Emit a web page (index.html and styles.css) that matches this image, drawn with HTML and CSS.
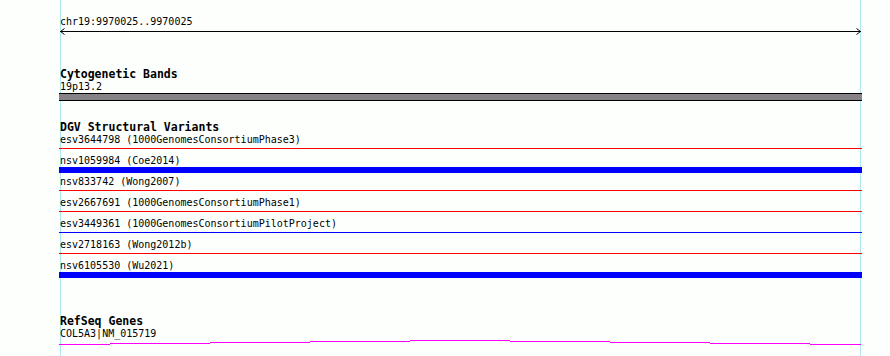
FILE: index.html
```html
<!DOCTYPE html>
<html lang="en">
<head>
  <meta charset="UTF-8" />
  <title>Track view</title>
  <link rel="stylesheet" href="styles.css">
</head>
<body>

<div class="track-view">

  <div class="ruler">
    <div class="label">chr19:9970025..9970025</div>
    <svg class="ruler-arrow" width="803" height="9" viewBox="0 0 803 9">
      <line x1="1" y1="4.5" x2="802" y2="4.5" />
      <polyline points="5.5,1.5 1.5,4.5 5.5,7.5" />
      <polyline points="797.5,1.5 801.5,4.5 797.5,7.5" />
    </svg>
  </div>

  <section class="track track-bands">
    <h2 class="track-title">Cytogenetic Bands</h2>
    <div class="label">19p13.2</div>
    <div class="band"></div>
  </section>

  <section class="track track-dgv">
    <h2 class="track-title">DGV Structural Variants</h2>
    <div class="variant-list">
      <div class="feature-row">
        <div class="label">esv3644798 (1000GenomesConsortiumPhase3)</div>
        <div class="feature thin red"></div>
      </div>
      <div class="feature-row">
        <div class="label">nsv1059984 (Coe2014)</div>
        <div class="feature thick blue"></div>
      </div>
      <div class="feature-row">
        <div class="label">nsv833742 (Wong2007)</div>
        <div class="feature thin red"></div>
      </div>
      <div class="feature-row">
        <div class="label">esv2667691 (1000GenomesConsortiumPhase1)</div>
        <div class="feature thin red"></div>
      </div>
      <div class="feature-row">
        <div class="label">esv3449361 (1000GenomesConsortiumPilotProject)</div>
        <div class="feature thin blue"></div>
      </div>
      <div class="feature-row">
        <div class="label">esv2718163 (Wong2012b)</div>
        <div class="feature thin red"></div>
      </div>
      <div class="feature-row">
        <div class="label">nsv6105530 (Wu2021)</div>
        <div class="feature thick blue"></div>
      </div>
    </div>
  </section>

  <section class="track track-genes">
    <h2 class="track-title">RefSeq Genes</h2>
    <div class="label">COL5A3|NM_015719</div>
    <!-- intron line, drawn as 1px steps -->
    <svg class="intron" width="803" height="5" viewBox="0 0 803 5">
      <rect x="0" y="4" width="51" height="1" />
      <rect x="51" y="3" width="100" height="1" />
      <rect x="151" y="2" width="100" height="1" />
      <rect x="251" y="1" width="100" height="1" />
      <rect x="351" y="0" width="100" height="1" />
      <rect x="451" y="1" width="100" height="1" />
      <rect x="551" y="2" width="100" height="1" />
      <rect x="651" y="3" width="100" height="1" />
      <rect x="751" y="4" width="51" height="1" />
    </svg>
  </section>

</div>

</body>
</html>
```

FILE: styles.css
```css
* { box-sizing: border-box; }
html, body {
  margin: 0;
  height: 100%;
}
body {
  background-color: #fdfffd;
  color: #000;
  font-family: "DejaVu Sans Mono", "Liberation Mono", monospace;
  overflow: hidden;
}
.track-view {
  height: 100%;
  padding: 16px 0 0 59px;
  /* the two light blue guide lines */
  background:
    linear-gradient(#ade9ee, #ade9ee) 60px 0 / 1px 100% no-repeat,
    linear-gradient(#ade9ee, #ade9ee) 860px 0 / 1px 100% no-repeat;
}
.label {
  font-size: 10px;
  line-height: 11px;
  height: 11px;
  padding-left: 1px;
  white-space: nowrap;
}
.track-title {
  margin: 0 0 1px;
  padding-left: 1px;
  font-size: 11.5px;
  font-weight: bold;
  line-height: 12px;
  height: 12px;
  white-space: nowrap;
}
.ruler-arrow {
  display: block;
  shape-rendering: crispEdges;
}
.ruler-arrow line,
.ruler-arrow polyline {
  stroke: #000;
  stroke-width: 1;
  fill: none;
}
.ruler-arrow polyline {
  shape-rendering: auto;
}
.track-bands { margin-top: 32px; }
.track-dgv { margin-top: 20px; }
.track-genes { margin-top: 34px; }
.band {
  width: 803px;
  height: 8px;
  margin-top: 1px;
  background: #858385;
  border-top: 1px solid #000;
  border-bottom: 1px solid #000;
}
.variant-list {
  margin-top: 1px;
}
.feature-row {
  height: 21px;
}
.feature {
  width: 803px;
}
.feature.thin {
  margin-top: 3px;
  height: 1px;
}
.feature.thick {
  margin-top: 1px;
  height: 6px;
}
.feature.red { background: #ff0000; }
.feature.blue { background: #0000ff; }
.intron {
  display: block;
  margin-top: 1px;
  shape-rendering: crispEdges;
}
.intron rect {
  fill: #ff00ff;
}
```
